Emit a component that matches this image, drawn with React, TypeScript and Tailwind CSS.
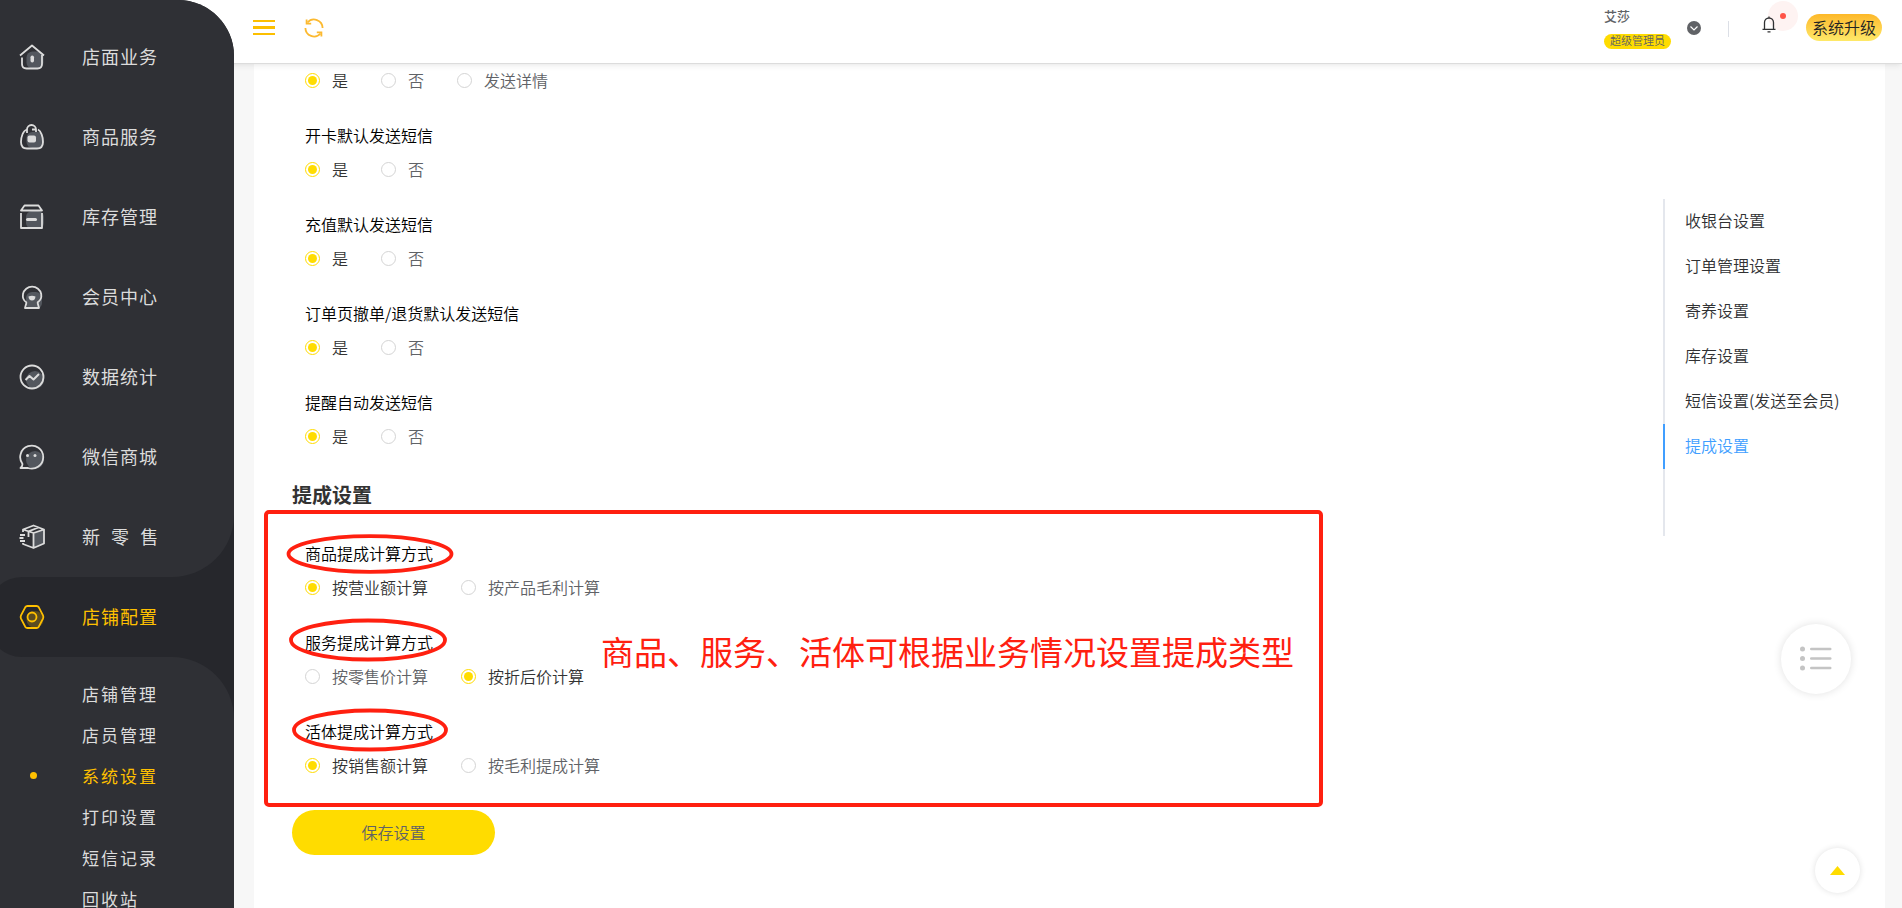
import type { ReactNode } from "react";

const iconProps = {
    width: 26,
    height: 26,
    viewBox: "0 0 26 26",
    fill: "none",
    stroke: "currentColor",
    strokeWidth: 1.8,
    strokeLinejoin: "round" as const,
};

const menu: { name: string; icon: ReactNode }[] = [
    {
        name: "店面业务",
        icon: (
            <svg {...iconProps}>
                <rect x="7.500" y="7.500" width="17" height="17" rx="6" fill="#53575e" stroke="none" />
                <path d="M1 11.500 13 1.500l12 10" />
                <path d="M3 13.500v6.500q0 4.500 4.500 4.500h11q4.500 0 4.500-4.500v-9" />
                <rect x="11.500" y="11.500" width="3.500" height="7" rx="1.700" fill="currentColor" stroke="none" />
            </svg>
        ),
    },
    {
        name: "商品服务",
        icon: (
            <svg {...iconProps}>
                <rect x="7.500" y="8" width="17" height="16" rx="6" fill="#53575e" stroke="none" />
                <path d="M8 5.500C4 6.500 2 13 2 18q0 6.500 6 6.500h10q6 0 6-6.500c0-5-2-11-5-12.500" />
                <path d="M8 9V5.500a4.500 4.500 0 0 1 9 0V8M13 5.500h4" />
                <rect x="8.500" y="11.500" width="8.500" height="7" rx="2" fill="currentColor" stroke="none" />
            </svg>
        ),
    },
    {
        name: "库存管理",
        icon: (
            <svg {...iconProps}>
                <rect x="7" y="7" width="18" height="18" rx="6" fill="#53575e" stroke="none" />
                <path d="M2 6.500 5.500 1.500h14l3.500 5H2ZM2 9v15h21V9M1.500 6.500h22" />
                <rect x="7" y="14" width="11" height="3" rx="1.500" fill="currentColor" stroke="none" />
            </svg>
        ),
    },
    {
        name: "会员中心",
        icon: (
            <svg {...iconProps}>
                <rect x="7" y="8" width="16" height="17" rx="6" fill="#53575e" stroke="none" />
                <path d="M7.500 18.500C4.500 16.500 3.500 13 4 10a9.300 9.300 0 0 1 18.200 0c.5 3-.700 6.500-3.700 8.500l1.500 5.500H6l1.500-5.500Z" />
                <path d="M9.500 12.500q3.500-1.500 7 0-.3 4-3.500 4t-3.500-4Z" fill="currentColor" stroke="none" />
                <path d="M8.500 18.500h9" stroke="#53575e" strokeWidth="2.500" />
            </svg>
        ),
    },
    {
        name: "数据统计",
        icon: (
            <svg {...iconProps}>
                <circle cx="16" cy="16" r="9" fill="#53575e" stroke="none" />
                <circle cx="13" cy="13" r="11.500" />
                <path d="m6.500 16 4-4 4 3.500 5.500-5.500" strokeWidth="2" />
            </svg>
        ),
    },
    {
        name: "微信商城",
        icon: (
            <svg {...iconProps}>
                <circle cx="16" cy="16" r="9" fill="#53575e" stroke="none" />
                <path d="M3.500 20A11.500 11.500 0 1 1 9 24H1.500q2-1.500 2-4Z" />
                <circle cx="8.500" cy="11.500" r="1.500" fill="currentColor" stroke="none" />
                <circle cx="16" cy="11.500" r="1.500" fill="currentColor" stroke="none" />
            </svg>
        ),
    },
    {
        name: "新  零  售",
        icon: (
            <svg {...iconProps}>
                <path d="M14.500 9 25 5.500V20l-10.500 4.500Z" fill="#53575e" stroke="none" />
                <path d="M4 8V5.500L14.500 1.500 25 5.500v14L14.500 24 4 20v-1M4 5.500 14.500 9 25 5.500M14.500 9v15M9.500 13V7.300L19.500 3.500" />
                <path d="M1 11h5M.5 14h4M1 17h5" />
            </svg>
        ),
    },
];

const subMenu = ["店铺管理", "店员管理", "系统设置", "打印设置", "短信记录", "回收站"];

const smsSettings = ["开卡默认发送短信", "充值默认发送短信", "订单页撤单/退货默认发送短信", "提醒自动发送短信"];

const commissionSettings = [
    { title: "商品提成计算方式", options: ["按营业额计算", "按产品毛利计算"], checked: 0 },
    { title: "服务提成计算方式", options: ["按零售价计算", "按折后价计算"], checked: 1 },
    { title: "活体提成计算方式", options: ["按销售额计算", "按毛利提成计算"], checked: 0 },
];

const anchors = ["收银台设置", "订单管理设置", "寄养设置", "库存设置", "短信设置(发送至会员)", "提成设置"];

function RadioRow({ name, options, checked = 0 }: { name: string; options: string[]; checked?: number }) {
    return (
        <div className="flex h-6 items-center gap-[33px]">
            {options.map((option, i) => (
                <label key={option} className="flex items-center gap-3 text-[#606266] has-checked:text-[#333]">
                    <input
                        type="radio"
                        name={name}
                        defaultChecked={i === checked}
                        className="size-[15px] shrink-0 appearance-none rounded-full border border-[#d4d4d4] bg-white bg-clip-content p-[2px] checked:border-[#ffdc00] checked:bg-[#ffdc00]"
                    />
                    <span>{option}</span>
                </label>
            ))}
        </div>
    );
}

function Setting({ title, options, checked }: { title: string; options: string[]; checked?: number }) {
    return (
        <fieldset>
            <legend className="mb-[9px] h-6 leading-[22px] text-black">{title}</legend>
            <RadioRow name={title} options={options} checked={checked} />
        </fieldset>
    );
}

function Sidebar() {
    return (
        <nav className="z-20 flex w-[234px] shrink-0 flex-col overflow-hidden rounded-tr-[56px] bg-[#26272c] text-[#dcdcdc]">
            <ul className="-mt-1 shrink-0 rounded-br-[62px] bg-[#2f3035] pt-[21px]">
                {menu.map((item) => (
                    <li key={item.name}>
                        <a href="#" className="flex h-20 items-center gap-[37px] pl-[19px] text-lg tracking-[1px] whitespace-pre">
                            {item.icon}
                            <span className="pb-[2px]">{item.name}</span>
                        </a>
                    </li>
                ))}
            </ul>
            <div className="shrink-0 bg-[#2f3035]">
                <a href="#" className="-ml-3 flex h-20 items-center gap-[37px] rounded-l-[34px] bg-[#26272c] pl-[31px] text-lg tracking-[1px] text-[#ffc000]">
                    <svg {...iconProps}>
                        <circle cx="16" cy="15.500" r="8.500" fill="#5a4b20" stroke="none" />
                        <path d="M8.500 2h9q1.500 0 2.300 1.300l4.200 8q.8 1.700 0 3.400l-4.200 8q-.8 1.300-2.300 1.300h-9q-1.500 0-2.300-1.300L2 14.700q-.8-1.700 0-3.400l4.200-8Q7 2 8.500 2Z" />
                        <circle cx="13" cy="13" r="4.500" />
                    </svg>
                    <span className="pb-[2px]">店铺配置</span>
                </a>
            </div>
            <ul className="grow rounded-tr-[62px] bg-[#2f3035] pt-4">
                {subMenu.map((name) => (
                    <li key={name}>
                        {name === "系统设置" ? (
                            <a href="#" className="flex h-[41px] items-center gap-[45px] pl-[30px] text-[17px] tracking-[2px] text-[#ffc000]">
                                <span className="size-[7px] rounded-full bg-[#ffc000]" />
                                {name}
                            </a>
                        ) : (
                            <a href="#" className="flex h-[41px] items-center pl-[82px] text-[17px] tracking-[2px]">
                                {name}
                            </a>
                        )}
                    </li>
                ))}
            </ul>
        </nav>
    );
}

function Header() {
    return (
        <header className="z-10 -ml-20 flex h-16 shrink-0 items-start justify-between border-b border-[#dcdcdc] bg-white pr-5 pl-[99px] shadow-md shadow-black/5">
            <div className="flex gap-[29px] pt-[18px]">
                <button type="button" aria-label="折叠菜单" className="text-[#fcbf00]">
                    <svg width="22" height="20" viewBox="0 0 22 20" fill="currentColor">
                        <path d="M0 2h22v2H0zM0 8h22v3H0zM0 15h22v2H0z" />
                    </svg>
                </button>
                <button type="button" aria-label="刷新" className="text-[#fcb92f]">
                    <svg width="20" height="20" viewBox="0 0 20 20" fill="none" stroke="currentColor" strokeWidth="1.8">
                        <path d="M3.500 4.500A8.600 8.600 0 0 1 18.600 10M16.500 15.500A8.600 8.600 0 0 1 1.400 10" />
                        <path d="M2.600 1.500v4.200h4.600M17.400 18.500v-4.200h-4.600" />
                    </svg>
                </button>
            </div>
            <div className="flex items-start">
                <div className="flex w-[67px] flex-col pt-[6px]">
                    <span className="text-[13px] leading-5 font-medium text-[#606266]">艾莎</span>
                    <span className="mt-2 h-[15px] rounded-full bg-[#ffdc00] text-center text-[11px] leading-[13px] font-[350] text-[#606266]">超级管理员</span>
                </div>
                <button type="button" aria-label="账户菜单" className="mt-[21px] ml-4">
                    <svg width="14" height="14" viewBox="0 0 14 14">
                        <circle cx="7" cy="7" r="7" fill="#606266" />
                        <path d="m3.500 5.500 3.500 3.500 3.500-3.500" fill="none" stroke="#fff" strokeWidth="1.200" />
                    </svg>
                </button>
                <span className="mt-[21px] ml-[27px] h-4 w-px bg-[#dcdfe6]" />
                <button type="button" aria-label="消息通知" className="relative mt-4 ml-[33px]">
                    <span className="absolute -top-[15px] left-[6px] flex size-[30px] items-center justify-center rounded-full bg-[#fef3f2]">
                        <span className="size-[6px] rounded-full bg-[#ff5448]" />
                    </span>
                    <svg className="relative" width="14" height="17" viewBox="0 0 14 17" fill="none" stroke="#303133" strokeWidth="1.300">
                        <path d="M.5 13.300h13M2.500 13V6.500a4.500 4.500 0 0 1 9 0V13M7 2V.5M5.500 15.800h3" />
                    </svg>
                </button>
                <button type="button" className="mt-[14px] ml-[30px] h-[27px] rounded-full bg-linear-to-b from-[#fdb827] to-[#fee968] px-[6px] leading-[25px] font-[350] text-[#222]">
                    系统升级
                </button>
            </div>
        </header>
    );
}

// Red marks drawn over the commission block
function Annotation() {
    return (
        <div className="pointer-events-none absolute -top-8 -left-7 h-[297px] w-[1059px] rounded-[5px] border-4 border-[#ff2010]">
            <svg className="absolute top-0 left-0" width="200" height="260" viewBox="0 0 200 260" fill="none" stroke="#ff2010" strokeWidth="3.800">
                <ellipse cx="102" cy="40" rx="81.500" ry="17.800" />
                <ellipse cx="100" cy="126" rx="77" ry="19.500" />
                <ellipse cx="102" cy="216" rx="76" ry="19.500" />
            </svg>
            <p className="absolute top-[113px] left-[333px] text-[33px] leading-[48px] font-normal whitespace-nowrap text-[#ff2010]">
                商品、服务、活体可根据业务情况设置提成类型
            </p>
        </div>
    );
}

export default function App() {
    return (
        <div className="flex h-screen overflow-hidden bg-[#f7f7f7] font-['Noto_Sans_CJK_SC',sans-serif] text-base leading-6">
            <Sidebar />
            <div className="flex min-w-0 grow flex-col">
                <Header />
                <main className="mr-[17px] ml-5 flex grow justify-between bg-white font-[350]">
                    <form className="flex flex-col gap-[33px] pt-1 pl-[38px]">
                        <div className="flex flex-col gap-8 pl-[13px]">
                            <RadioRow name="消费默认发送短信" options={["是", "否", "发送详情"]} />
                            {smsSettings.map((title) => (
                                <Setting key={title} title={title} options={["是", "否"]} />
                            ))}
                        </div>
                        <h2 className="text-xl leading-7 font-bold text-[#333]">提成设置</h2>
                        <div className="relative flex flex-col gap-8 pl-[13px]">
                            {commissionSettings.map((item) => (
                                <Setting key={item.title} {...item} />
                            ))}
                            <Annotation />
                        </div>
                        <button type="button" className="h-[45px] w-[203px] rounded-full bg-[#ffdc00] pb-[2px] text-[#606266]">
                            保存设置
                        </button>
                    </form>
                    <aside className="w-[222px] shrink-0 pt-[135px]">
                        <ul className="border-l-2 border-[#e4e7ed] pb-[67px]">
                            {anchors.map((name) => (
                                <li key={name}>
                                    <a
                                        href="#"
                                        aria-current={name === "提成设置" ? "true" : undefined}
                                        className="-ml-[2px] block h-[45px] border-l-2 border-transparent pl-5 leading-[43px] text-[#303133] aria-[current]:border-[#409eff] aria-[current]:text-[#409eff]"
                                    >
                                        {name}
                                    </a>
                                </li>
                            ))}
                        </ul>
                    </aside>
                </main>
            </div>
            <button type="button" aria-label="快捷列表" className="fixed right-[51px] bottom-[214px] flex size-[70px] items-center justify-center rounded-full bg-white shadow-[0_0_8px_rgba(0,0,0,0.12)]">
                <svg width="32" height="26" viewBox="0 0 32 26" fill="#c4c4c4">
                    <circle cx="2.500" cy="3" r="2.500" />
                    <circle cx="2.500" cy="12.500" r="2.500" />
                    <circle cx="2.500" cy="22" r="2.500" />
                    <rect x="10" y="1.800" width="21.500" height="2.400" rx="1.200" />
                    <rect x="10" y="11.300" width="21.500" height="2.400" rx="1.200" />
                    <rect x="10" y="20.800" width="21.500" height="2.400" rx="1.200" />
                </svg>
            </button>
            <button type="button" aria-label="回到顶部" className="fixed right-[42px] bottom-[15px] flex size-[45px] items-center justify-center rounded-full bg-white shadow-[0_0_6px_rgba(0,0,0,0.12)]">
                <svg width="15" height="9" viewBox="0 0 15 9" fill="#ffdc00">
                    <path d="M7.500 0 15 9H0z" />
                </svg>
            </button>
        </div>
    );
}
